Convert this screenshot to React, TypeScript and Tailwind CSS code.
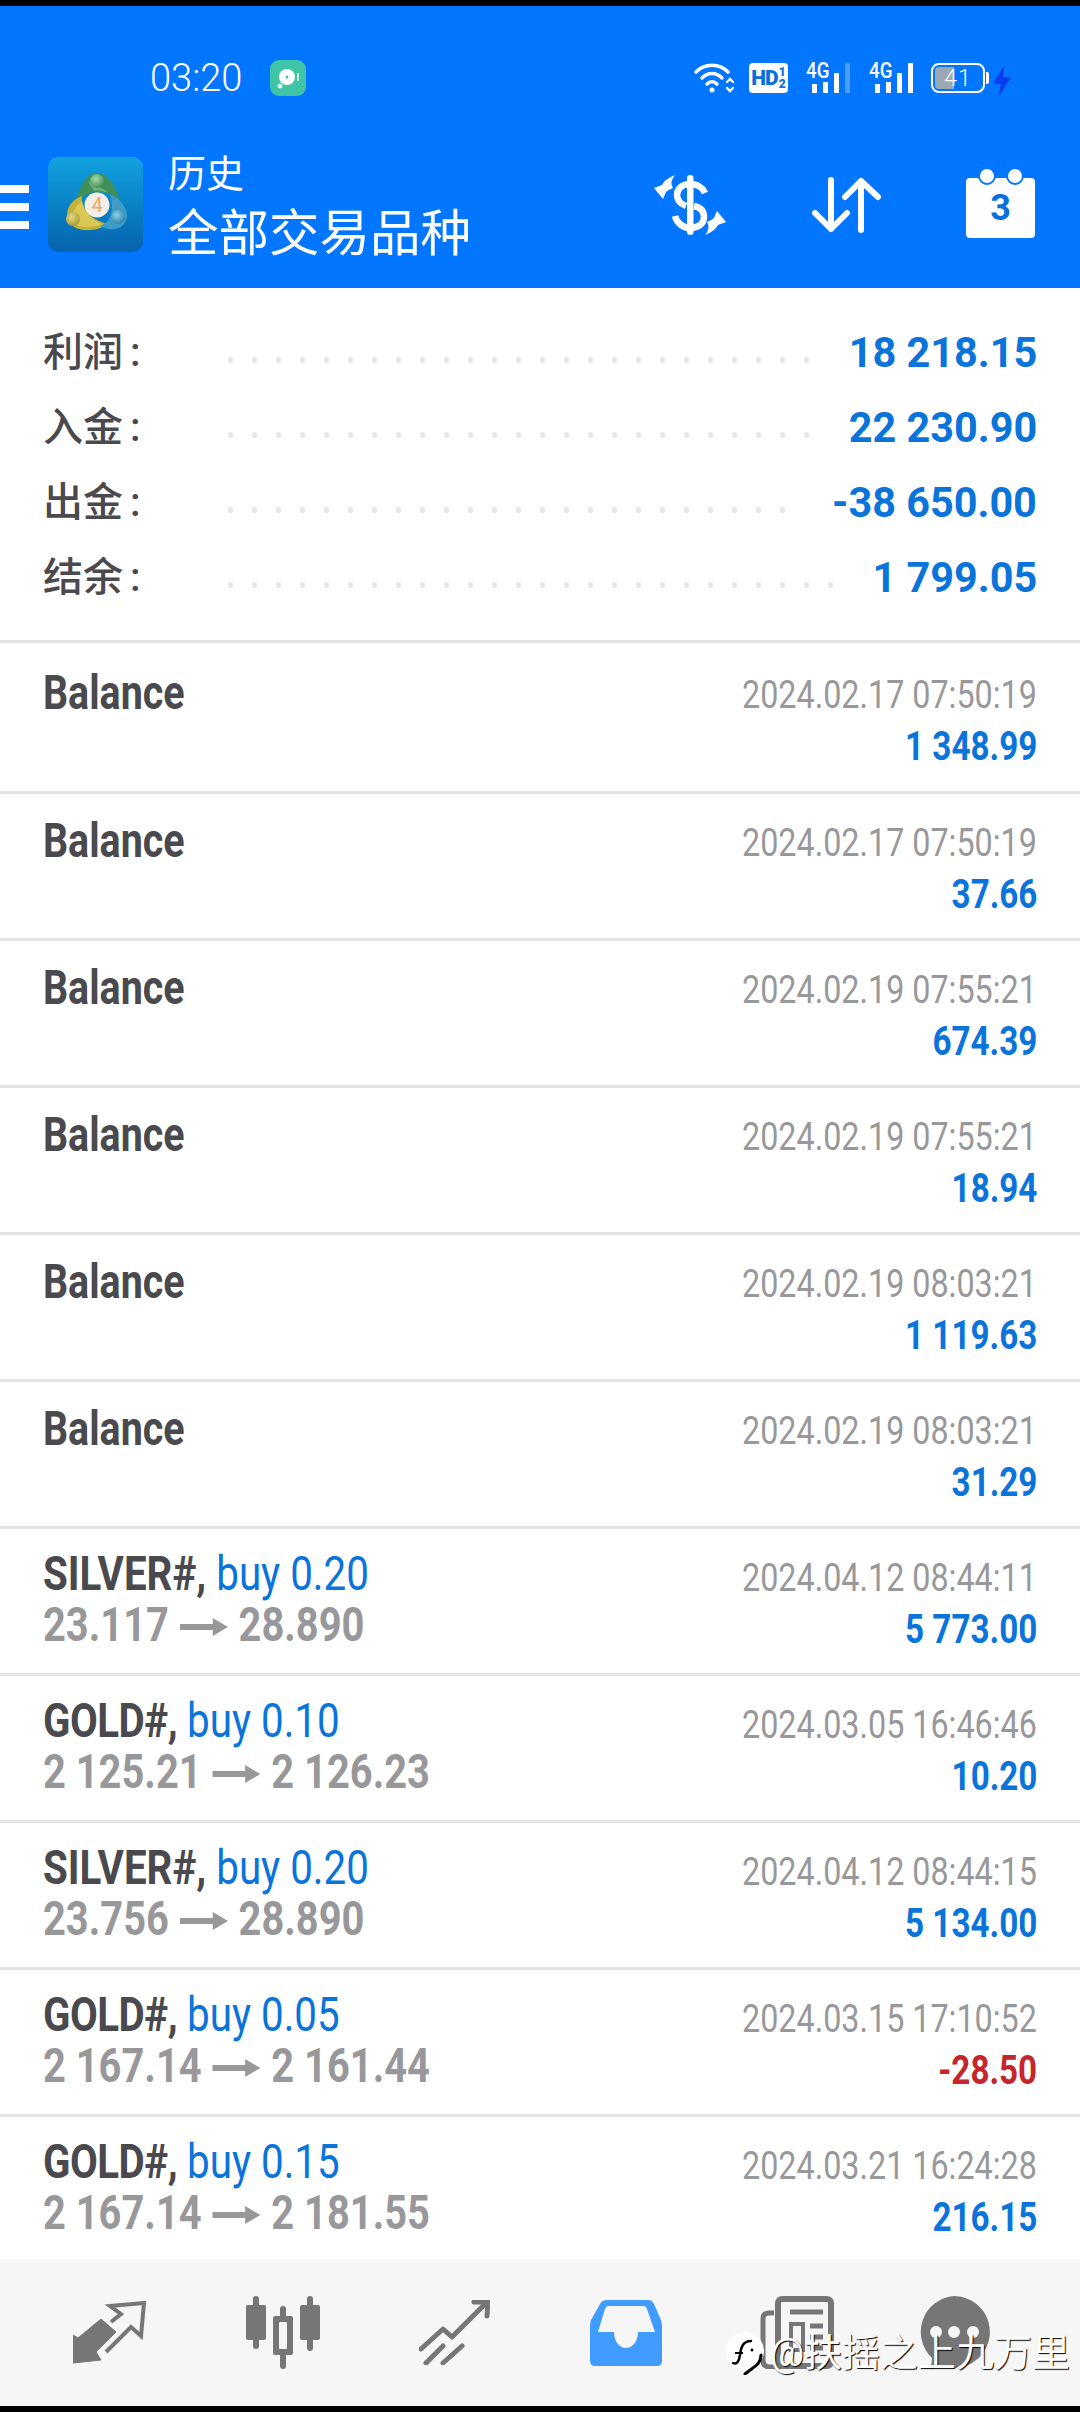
import React from 'react';

const summary = [
  { label: '利润', value: '18 218.15', dots: 25 },
  { label: '入金', value: '22 230.90', dots: 25 },
  { label: '出金', value: '-38 650.00', dots: 24 },
  { label: '结余', value: '1 799.05', dots: 26 },
];

const balances = [
  { date: '2024.02.17 07:50:19', amount: '1 348.99' },
  { date: '2024.02.17 07:50:19', amount: '37.66' },
  { date: '2024.02.19 07:55:21', amount: '674.39' },
  { date: '2024.02.19 07:55:21', amount: '18.94' },
  { date: '2024.02.19 08:03:21', amount: '1 119.63' },
  { date: '2024.02.19 08:03:21', amount: '31.29' },
];

const trades = [
  { symbol: 'SILVER#,', side: 'buy 0.20', from: '23.117', to: '28.890', date: '2024.04.12 08:44:11', amount: '5 773.00' },
  { symbol: 'GOLD#,', side: 'buy 0.10', from: '2 125.21', to: '2 126.23', date: '2024.03.05 16:46:46', amount: '10.20' },
  { symbol: 'SILVER#,', side: 'buy 0.20', from: '23.756', to: '28.890', date: '2024.04.12 08:44:15', amount: '5 134.00' },
  { symbol: 'GOLD#,', side: 'buy 0.05', from: '2 167.14', to: '2 161.44', date: '2024.03.15 17:10:52', amount: '-28.50' },
  { symbol: 'GOLD#,', side: 'buy 0.15', from: '2 167.14', to: '2 181.55', date: '2024.03.21 16:24:28', amount: '216.15' },
];

function Signal({ last }: { last: string }) {
  return (
    <div className="relative h-[30px] w-[44px]">
      <span className="absolute left-0 top-[-2px] origin-left scale-x-[.85] text-[22px] leading-[20px] font-medium text-white">4G</span>
      <div className="absolute bottom-0 left-[6px] flex items-end gap-[6px]">
        <div className="h-[9px] w-[5px] bg-white" />
        <div className="h-[11px] w-[5px] bg-white" />
        <div className="h-[20px] w-[5px] bg-white" />
        <div className={`h-[30px] w-[5px] ${last}`} />
      </div>
    </div>
  );
}

function StatusBar() {
  return (
    <div className="flex h-[144px] items-center pl-[150px] pr-[68px]">
      <span className="text-[38px] font-light leading-none text-white">03:20</span>
      <div className="ml-[28px] flex size-[36px] items-center justify-center rounded-[9px] bg-[#40c4a8]">
        <svg viewBox="0 0 36 36" className="size-[36px]">
          <circle cx="17" cy="17" r="8" fill="#fff" />
          <circle cx="17" cy="17" r="1.5" fill="#40c4a8" />
          <circle cx="10" cy="26" r="2.5" fill="#fff" opacity="0.8" />
          <rect x="27" y="13" width="2" height="8" fill="#fff" opacity="0.7" />
        </svg>
      </div>
      <div className="ml-auto flex items-center">
        <svg viewBox="0 0 40 30" className="h-[30px] w-[40px]" fill="none" stroke="#fff" strokeWidth="3.4" strokeLinecap="round">
          <path d="M2 9 C11 0 25 0 34 9" />
          <path d="M8 15 C14 9 22 9 28 15" />
          <path d="M13 21 C16 18 20 18 23 21" />
          <circle cx="18" cy="27" r="2.5" fill="#fff" stroke="none" />
          <path d="M33 19 L36 16 L39 19 M33 25 L36 28 L39 25" strokeWidth="2.4" />
        </svg>
        <div className="ml-[15px] flex h-[30px] w-[39px] items-center justify-center rounded-[4px] bg-white text-[#0a6fdc]">
          <span className="text-[21px] font-black leading-none tracking-[-1px]">HD</span>
          <span className="ml-[1px] flex flex-col text-[12px] font-black leading-[12px]">
            <span>1</span>
            <span>2</span>
          </span>
        </div>
        <div className="ml-[18px]"><Signal last="bg-[#4c9dff]" /></div>
        <div className="ml-[19px]"><Signal last="bg-white" /></div>
        <div className="ml-[18px] flex items-center">
          <div className="relative flex h-[30px] w-[54px] items-center justify-center overflow-hidden rounded-[8px] border-[2.5px] border-white">
            <div className="absolute bottom-[2px] left-[2px] top-[2px] w-[19px] rounded-l-[4px] bg-[#9aa9b3]" />
            <span className="relative text-[23px] font-light leading-none tracking-[1px] text-white">41</span>
          </div>
          <div className="ml-[1px] h-[12px] w-[3px] rounded-r-[2px] bg-white" />
        </div>
        <svg viewBox="0 0 18 24" className="ml-[3px] mt-[6px] h-[32px] w-[20px]" preserveAspectRatio="none">
          <path d="M11 0 L1 14 H8 L6 24 L17 9 H10 Z" fill="#0a3cf0" />
        </svg>
      </div>
    </div>
  );
}

function Logo() {
  return (
    <div className="mt-[7px] size-[95px] shrink-0 overflow-hidden rounded-[10px] bg-gradient-to-b from-[#12a2e0] to-[#0763ad]">
      <svg viewBox="0 0 95 95" className="size-[95px]">
        <defs>
          <radialGradient id="ballG" cx="40%" cy="35%" r="70%">
            <stop offset="0%" stopColor="#a8d8a8" />
            <stop offset="100%" stopColor="#3e8f58" />
          </radialGradient>
          <radialGradient id="ballY" cx="40%" cy="35%" r="70%">
            <stop offset="0%" stopColor="#e4d882" />
            <stop offset="100%" stopColor="#a8962c" />
          </radialGradient>
          <radialGradient id="ballB" cx="40%" cy="35%" r="70%">
            <stop offset="0%" stopColor="#8fd0e8" />
            <stop offset="100%" stopColor="#2a7fa8" />
          </radialGradient>
        </defs>
        <path d="M49 16 C60 16 68 30 72 44 C63 36 56 34 49 36 C42 34 36 38 28 47 C30 32 38 16 49 16 Z" fill="#3e8f58" />
        <path d="M21 65 C16 53 23 43 34 39 C33 50 40 62 60 67 C49 75 28 76 21 65 Z" fill="#c4b238" />
        <path d="M62 38 C71 40 79 50 79 59 C78 71 65 76 52 69 C62 65 67 56 62 38 Z" fill="#3f9cc8" />
        <path d="M24 64 C24 55 28 48 34 44 C36 54 42 62 54 67 C44 71 30 72 24 64 Z" fill="#e2d160" opacity="0.7" />
        <path d="M47 34 C43 30 40 26 41 24 C46 30 56 30 60 36 C56 34 51 33 47 34 Z" fill="#7cc48a" opacity="0.7" />
        <circle cx="49" cy="24" r="7" fill="url(#ballG)" />
        <circle cx="25" cy="62" r="7" fill="url(#ballY)" />
        <circle cx="70" cy="60" r="7" fill="url(#ballB)" />
        <circle cx="49" cy="48" r="12.5" fill="#f4efe6" />
        <text x="49" y="55" textAnchor="middle" fontSize="20" fontFamily="Roboto, sans-serif" fill="#f0a468">4</text>
      </svg>
    </div>
  );
}

function DollarIcon() {
  return (
    <svg viewBox="0 0 100 90" className="h-[90px] w-[100px]" fill="none">
      <path d="M65 33 C62 26 56 24 50 24 C41 24 37 30 37 35 C37 41 41 44 46 46" stroke="#fff" strokeWidth="6.5" />
      <path d="M35 56 C37 64 44 68 50 68 C59 68 64 63 64 57 C64 50 59 47 54 46" stroke="#fff" strokeWidth="6.5" />
      <rect x="47" y="15" width="6.5" height="60" rx="3" fill="#fff" />
      <path d="M35 15 Q25 19 22 25 L14 28 L23 39 L26 32 Q28 30 33 28 Q29 22 35 15 Z" fill="#fff" />
      <path d="M35 15 Q25 19 22 25 L14 28 L23 39 L26 32 Q28 30 33 28 Q29 22 35 15 Z" fill="#fff" transform="rotate(180 50 45)" />
    </svg>
  );
}

function Header() {
  return (
    <header className="h-[282px] shrink-0 bg-[#0276fe] shadow-[0_1px_0_#1d5fa8]">
      <StatusBar />
      <div className="flex items-start">
        <div className="mt-[35px] flex w-[29px] flex-col gap-[10px]">
          <div className="h-[8px] bg-white" />
          <div className="h-[8px] bg-white" />
          <div className="h-[8px] bg-white" />
        </div>
        <div className="ml-[19px]"><Logo /></div>
        <div className="ml-[25px] flex flex-col text-white">
          <span className="text-[38px] font-normal leading-[48px]">历史</span>
          <span className="mt-[6px] text-[50.5px] font-normal leading-[60px]">全部交易品种</span>
        </div>
        <div className="ml-auto mt-[10px]"><DollarIcon /></div>
        <svg viewBox="0 0 70 56" className="ml-[71px] mt-[27px] h-[56px] w-[70px]" fill="none" stroke="#fff" strokeWidth="6" strokeLinecap="round" strokeLinejoin="round">
          <path d="M20 3 V52 M4 36 L20 52 L36 36" />
          <path d="M50 53 V4 M34 20 L50 4 L67 20" />
        </svg>
        <div className="relative ml-[85px] mr-[45px] mt-[28px] flex h-[60px] w-[69px] items-center justify-center rounded-[4px] bg-white">
          <span className="text-[36px] font-bold leading-none text-[#0a6fdc]">3</span>
          <div className="absolute left-[12px] top-[-11px] size-[18px] rounded-full border-[2px] border-[#0276fe] bg-white" />
          <div className="absolute left-[40px] top-[-11px] size-[18px] rounded-full border-[2px] border-[#0276fe] bg-white" />
        </div>
      </div>
    </header>
  );
}

function Summary() {
  return (
    <section className="h-[355px] shrink-0 border-b-[3px] border-[#e4e4e4] bg-white px-[43px] pt-[27px]">
      {summary.map((row) => (
        <div key={row.label} className="flex h-[75px] items-center">
          <span className="flex w-[185px] shrink-0 items-center text-[40px] font-medium leading-none text-[#4a4a4e]">
            {row.label}
            <span className="ml-[7px]">:</span>
          </span>
          <div className="mt-[14px] flex gap-[19px]">
            {Array.from({ length: row.dots }).map((_, i) => (
              <div key={i} className="h-[6px] w-[5px] rounded-full bg-[#e6e6e6]" />
            ))}
          </div>
          <span className="ml-auto origin-right scale-x-[.985] whitespace-nowrap text-[42px] font-bold leading-[75px] text-[#0a74da]">{row.value}</span>
        </div>
      ))}
    </section>
  );
}

function RightCell({ date, amount }: { date: string; amount: string }) {
  const negative = amount.startsWith('-');
  return (
    <div className="ml-auto flex flex-col items-end pt-[24px]">
      <span className="origin-right scale-x-[.85] whitespace-nowrap text-[38px] leading-[50px] text-[#98989a]">{date}</span>
      <span className={`origin-right scale-x-[.83] pt-[2px] whitespace-nowrap text-[40px] font-bold leading-[50px] ${negative ? 'text-[#c5262b]' : 'text-[#0a74da]'}`}>{amount}</span>
    </div>
  );
}

function Row({ extra, children }: { extra?: boolean; children: React.ReactNode }) {
  return (
    <div className={`flex shrink-0 border-b-[3px] border-[#e4e4e4] bg-white px-[43px] ${extra ? 'h-[151px] pt-[3px]' : 'h-[147px]'}`}>
      {children}
    </div>
  );
}

function BalanceRow({ date, amount, extra }: { date: string; amount: string; extra?: boolean }) {
  return (
    <Row extra={extra}>
      <span className="origin-left scale-x-[.82] pt-[22px] text-[48px] font-bold leading-[50px] text-[#4a4a4e]">Balance</span>
      <RightCell date={date} amount={amount} />
    </Row>
  );
}

function TradeRow({ symbol, side, from, to, date, amount }: (typeof trades)[number]) {
  const gold = symbol.startsWith('GOLD');
  return (
    <Row>
      <div className="flex flex-col pt-[20px] whitespace-nowrap text-[48px] leading-[50px]">
        <div className="origin-left scale-x-[.84]">
          <span className={`font-bold text-[#4a4a4e] ${gold ? 'tracking-[-0.6px]' : ''}`}>{symbol}</span>
          <span className="text-[#0a74da]"> {side}</span>
        </div>
        <div className="mt-[1px] flex origin-left scale-x-[.83] items-center font-bold text-[#98989a]">
          <span>{from}</span>
          <svg viewBox="0 0 44 22" className="mx-[13px] mt-[4px] h-[22px] w-[58px]" preserveAspectRatio="none">
            <path d="M0 8 H30 V2 L44 11 L30 20 V14 H0 Z" fill="#98989a" />
          </svg>
          <span>{to}</span>
        </div>
      </div>
      <RightCell date={date} amount={amount} />
    </Row>
  );
}

function TabBar() {
  return (
    <nav className="relative flex h-[147px] shrink-0 items-center gap-[99px] bg-[#f6f6f6] pl-[73px]">
      <svg viewBox="0 0 74 64" className="h-[64px] w-[74px]" fill="none">
        <path d="M0 62 V34 L5 37 L28 18 L43 31 L23 51 L28 59 Z" fill="#767676" strokeLinejoin="round" stroke="#767676" strokeWidth="1" />
        <path d="M38 21 L48 13 L37 5 L71 2 L68 35 L58 26 L33 51" stroke="#767676" strokeWidth="4" />
      </svg>
      <svg viewBox="0 0 74 73" className="h-[73px] w-[74px]" fill="#767676">
        <rect x="0" y="9" width="20" height="35" rx="2" />
        <rect x="7" y="0" width="6" height="53" rx="3" />
        <rect x="54" y="9" width="20" height="35" rx="2" />
        <rect x="61" y="0" width="6" height="55" rx="3" />
        <rect x="34" y="10" width="6" height="63" rx="3" />
        <rect x="27" y="20" width="20" height="39" rx="2" />
        <rect x="33" y="26" width="8" height="27" rx="1" fill="#f6f6f6" />
      </svg>
      <svg viewBox="0 0 71 65" className="h-[65px] w-[71px]" fill="none" stroke="#767676" strokeWidth="5" strokeLinecap="round" strokeLinejoin="round">
        <path d="M2 49 L24 29 L33 37 L67 3" />
        <path d="M55 2 H69 L68 16" />
        <path d="M7 63 L24 46" />
        <path d="M24 63 L43 46" />
      </svg>
      <svg viewBox="0 0 72 66" className="ml-[1px] h-[66px] w-[72px]">
        <path
          fillRule="evenodd"
          fill="#409cff"
          d="M17 0 H58 Q62 0 64 4 L71 20 Q72 23 72 26 V61 Q72 66 67 66 H5 Q0 66 0 61 V26 Q0 23 1 20 L10 4 Q12 0 17 0 Z M18 6 Q16 6 15 9 L8 32 H24 C24 42 30 48 36 48 C42 48 48 42 48 32 H65 L57 9 Q56 6 54 6 Z"
        />
      </svg>
      <svg viewBox="0 0 74 73" className="ml-[-1px] h-[73px] w-[74px]" fill="none" stroke="#767676">
        <rect x="18" y="3" width="53" height="67" rx="4" strokeWidth="6" />
        <path d="M14 17 H9 Q3 17 3 23 V64 Q3 71 10 71 H22" strokeWidth="5" />
        <path d="M30 16 H63" strokeWidth="5" />
        <rect x="31" y="28" width="12" height="26" strokeWidth="4" />
        <path d="M50 30 H63 M50 41 H63 M50 52 H63" strokeWidth="5" />
      </svg>
      <svg viewBox="0 0 73 73" className="ml-[-15px] h-[73px] w-[73px]">
        <path d="M36 0 A36 36 0 1 1 24 70 L12 73 Q14 66 14 62 A36 36 0 0 1 36 0 Z" fill="#767676" />
        <circle cx="18" cy="36" r="6" fill="#f6f6f6" />
        <circle cx="36" cy="36" r="6" fill="#f6f6f6" />
        <circle cx="55" cy="36" r="6" fill="#f6f6f6" />
      </svg>
      {/* watermark over the tab bar */}
      <div className="absolute left-[725px] top-[72px] flex items-center">
        <svg viewBox="0 0 40 44" className="h-[44px] w-[40px]" fill="none">
          <circle cx="20" cy="20" r="19" fill="#fff" />
          <path d="M8 32 C12 34 14 30 15 24 C16 16 18 10 26 10" stroke="#000" strokeWidth="2.5" strokeLinecap="round" />
          <path d="M10 22 H18" stroke="#000" strokeWidth="2" />
          <path d="M36 24 C36 34 28 36 20 43" stroke="#000" strokeWidth="3" strokeLinecap="round" />
          <circle cx="27" cy="19" r="1.5" fill="#000" />
        </svg>
        <span className="ml-[5px] whitespace-nowrap text-[38px] leading-none text-white [text-shadow:1px_1px_1px_#000]">@扶摇之上九万里</span>
      </div>
    </nav>
  );
}

export default function App() {
  return (
    <div className="flex h-[2412px] w-[1080px] flex-col overflow-hidden bg-black pb-[6px] pt-[6px] font-['Roboto','Noto_Sans_CJK_SC',sans-serif]">
      <Header />
      <Summary />
      <main className="flex min-h-0 flex-1 flex-col overflow-hidden bg-white">
        {balances.map((b, i) => (
          <BalanceRow key={i} date={b.date} amount={b.amount} extra={i === 0} />
        ))}
        {trades.map((t, i) => (
          <TradeRow key={i} {...t} />
        ))}
      </main>
      <TabBar />
    </div>
  );
}
